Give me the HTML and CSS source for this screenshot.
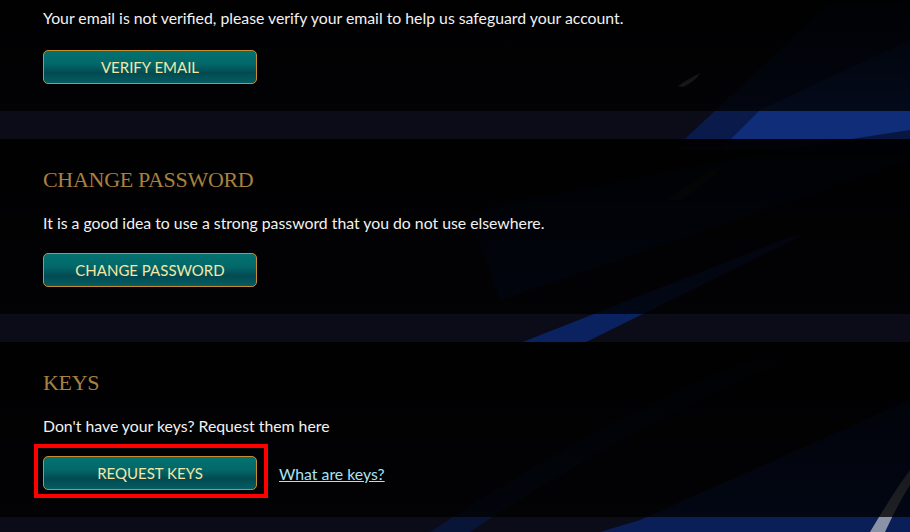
FILE: index.html
```html
<!DOCTYPE html>
<html lang="en">
<head>
    <meta charset="UTF-8">
    <meta name="viewport" content="width=device-width, initial-scale=1.0">
    <title>Account Settings</title>
    <link rel="stylesheet" href="styles.css">
</head>
<body>
    <svg class="backdrop" viewBox="0 0 910 532" preserveAspectRatio="none" aria-hidden="true">
        <polygon points="833,0 910,0 910,150 673,150" fill="#0a1a4a" />
        <polygon points="910,40 910,150 720,150 760,110" fill="#0f2d78" />
        <polygon points="470,215 500,205 780,150 910,130 910,160 500,300" fill="#081640" />
        <polygon points="515,345 790,237 805,234 580,345" fill="#0b2260" />
        <polygon points="640,520 910,400 910,532 600,532" fill="#0a1e58" />
        <path d="M870 532 Q895 490 910 470 L910 485 Q900 500 885 532 Z" fill="#8a92a8" />
        <path d="M760 355 Q600 420 430 532 L470 532 Q620 430 800 355 Z" fill="#081536" />
        <path d="M678 86 Q690 78 700 73 Q697 80 683 87 Z" fill="#7a8090" />
        <path d="M668 200 Q690 180 725 165 Q705 185 680 200 Z" fill="#2a2c36" />
    </svg>

    <main class="page">
        <section class="panel">
            <p class="panel-text">Your email is not verified, please verify your email to help us safeguard your account.</p>
            <div class="actions">
                <button class="button">Verify Email</button>
            </div>
        </section>

        <section class="panel">
            <h2 class="panel-title">Change Password</h2>
            <p class="panel-text">It is a good idea to use a strong password that you do not use elsewhere.</p>
            <div class="actions">
                <button class="button">Change Password</button>
            </div>
        </section>

        <section class="panel">
            <h2 class="panel-title">Keys</h2>
            <p class="panel-text">Don't have your keys? Request them here</p>
            <div class="actions">
                <span class="highlight">
                    <button class="button">Request Keys</button>
                </span>
                <a class="link" href="#">What are keys?</a>
            </div>
        </section>
    </main>
</body>
</html>
```

FILE: styles.css
```css
body {
    margin: 0;
    height: 532px;
    overflow: hidden;
    position: relative;
    background: #0c0c18;
    font-family: 'Lato', 'Open Sans', sans-serif;
    color: #f2f2f2;
}
.backdrop {
    position: absolute;
    top: 0;
    left: 0;
    width: 100%;
    height: 100%;
}
.page {
    position: relative;
    display: flex;
    flex-direction: column;
    gap: 28px;
}
.panel {
    display: flex;
    flex-direction: column;
    padding: 26px 43px 27px;
    background: linear-gradient(180deg, rgba(0,0,0,0.95) 0%, rgba(0,0,0,0.78) 100%);
}
.panel:first-child {
    padding-top: 8px;
}
.panel-title {
    margin: 0 0 18px;
    font-family: 'Liberation Serif', serif;
    font-weight: normal;
    font-size: 22px;
    letter-spacing: -0.3px;
    line-height: 30px;
    color: #a8803f;
    text-transform: uppercase;
}
.panel-text {
    margin: 0 0 20px;
    font-size: 15.8px;
    line-height: 20px;
}
.panel:first-child .panel-text {
    margin-bottom: 22px;
}
.actions {
    display: flex;
    align-items: center;
    gap: 22px;
}
.button {
    width: 214px;
    height: 34px;
    border: 1px solid #c98e2c;
    border-radius: 5px;
    background: linear-gradient(180deg, #047271 0%, #02686a 40%, #024a52 68%, #055c62 100%);
    color: #f3e7a6;
    font-family: 'Lato', 'Open Sans', sans-serif;
    font-size: 15px;
    text-transform: uppercase;
    cursor: pointer;
}
.highlight {
    position: relative;
    display: block;
}
.highlight::after {
    content: "";
    position: absolute;
    top: -12px;
    left: -9px;
    right: -11px;
    bottom: -8px;
    border: 4px solid #ff0000;
    pointer-events: none;
}
.link {
    color: #a9e2f2;
    font-size: 15.8px;
    text-decoration: underline;
}
```
